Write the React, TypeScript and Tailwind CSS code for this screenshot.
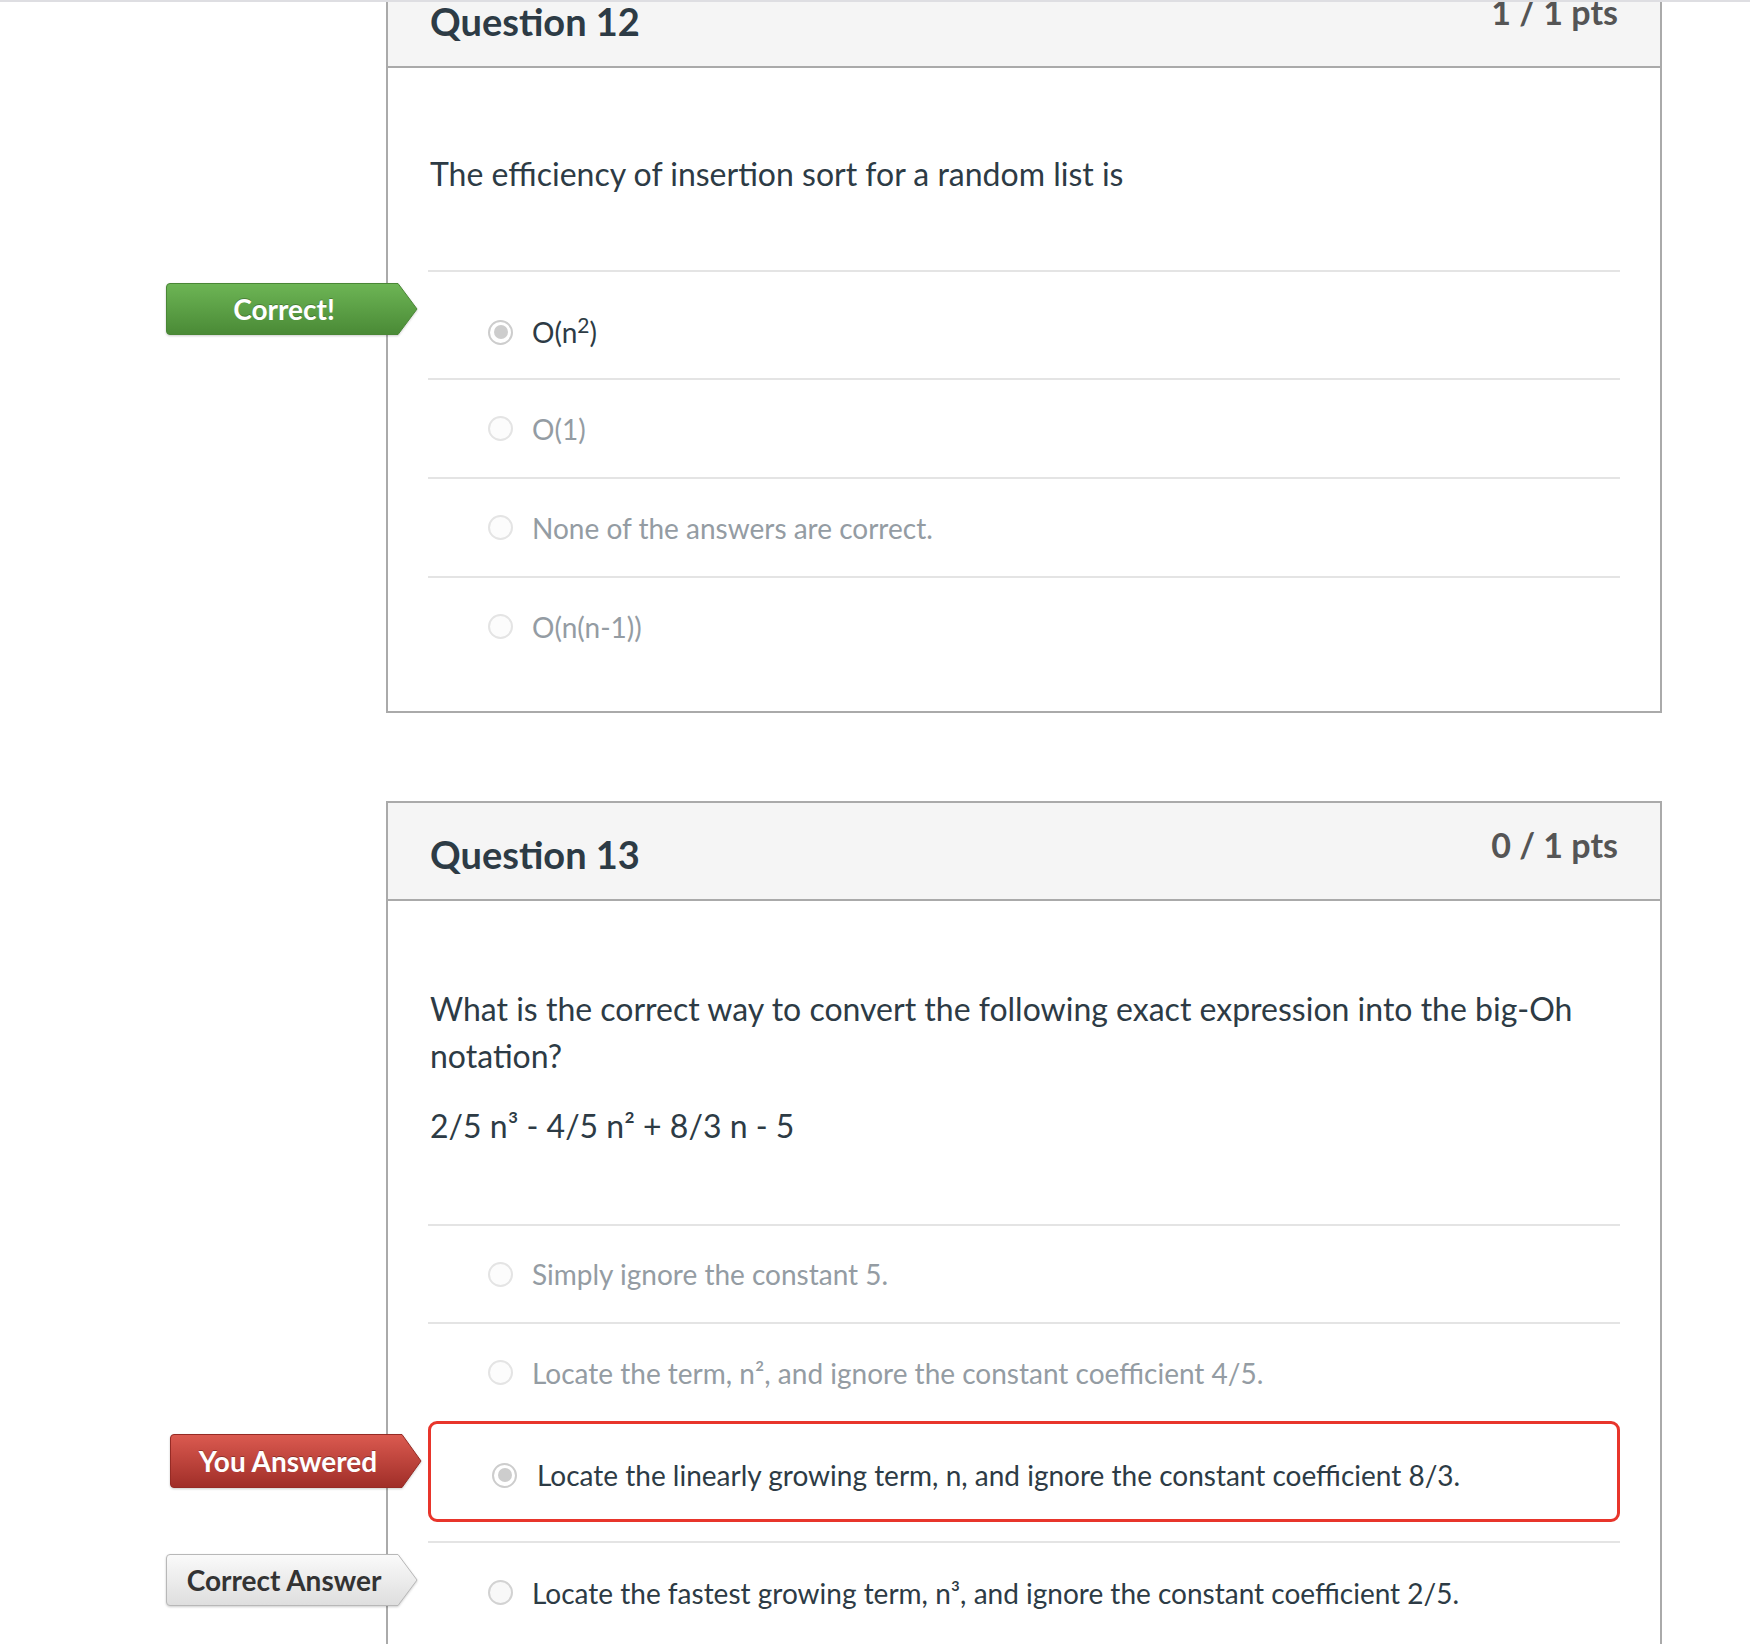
import React from "react";

type RadioKind = "checked" | "faint" | "plain";
type Tone = "green" | "red" | "gray";

function Radio({ kind }: { kind: RadioKind }) {
  if (kind === "checked") {
    return (
      <span className="flex h-[25px] w-[25px] shrink-0 items-center justify-center rounded-full border-2 border-[#cdcdcd] bg-white">
        <span className="h-[14px] w-[14px] rounded-full bg-[#cdcdcd]" />
      </span>
    );
  }
  return (
    <span
      className={
        kind === "faint"
          ? "h-[25px] w-[25px] shrink-0 rounded-full border-2 border-[#e4e4e4] bg-[#fcfcfc]"
          : "h-[25px] w-[25px] shrink-0 rounded-full border-2 border-[#d2d2d2] bg-[#f8f8f8]"
      }
    />
  );
}

const tones: Record<Tone, { top: string; bottom: string; stroke: string; text: string }> = {
  green: { top: "#6db555", bottom: "#4a8a36", stroke: "#4a8736", text: "text-white [text-shadow:0_-1px_0_rgba(0,0,0,0.25)]" },
  red: { top: "#db5a50", bottom: "#a02e28", stroke: "#962b25", text: "text-white [text-shadow:0_-1px_0_rgba(0,0,0,0.3)]" },
  gray: { top: "#fafafa", bottom: "#dedede", stroke: "#b8b8b8", text: "text-[#333333]" },
};

function Badge({ tone, label, h }: { tone: Tone; label: string; h: number }) {
  const t = tones[tone];
  const id = `grad-${tone}`;
  return (
    <div className="relative w-[252px]" style={{ height: h }}>
      <svg className="absolute inset-0 drop-shadow-[0_1px_1px_rgba(0,0,0,0.2)]" width="252" height={h} viewBox={`0 0 252 ${h}`}>
        <defs>
          <linearGradient id={id} x1="0" y1="0" x2="0" y2="1">
            <stop offset="0" stopColor={t.top} />
            <stop offset="1" stopColor={t.bottom} />
          </linearGradient>
        </defs>
        <path
          d={`M4 0.5 H232 L251 ${h / 2} L232 ${h - 0.5} H4 Q0.5 ${h - 0.5} 0.5 ${h - 4} V4 Q0.5 0.5 4 0.5 Z`}
          fill={`url(#${id})`}
          stroke={t.stroke}
          strokeWidth="1"
        />
      </svg>
      <div className={`relative flex h-full w-[236px] items-center justify-center text-[28px] font-bold ${t.text}`}>
        {label}
      </div>
    </div>
  );
}

function Header({ title, pts }: { title: string; pts: string }) {
  return (
    <div className="flex h-[98px] items-start justify-between border-b-2 border-[#aaaaaa] bg-[#f5f5f5] px-[42px]">
      <div className="mt-[29px] text-[38px] font-bold leading-[1.2] text-[#2d3b45]">{title}</div>
      <div className="mt-[22px] text-[34px] font-bold leading-[1.2] text-[#555555]">{pts}</div>
    </div>
  );
}

function Row({ children, kind, faded, h = 97 }: { children: React.ReactNode; kind: RadioKind; faded?: boolean; h?: number }) {
  return (
    <div className="flex items-center border-t-2 border-[#e4e4e4] pl-[60px]" style={{ height: h + 2 }}>
      <Radio kind={kind} />
      <span className={`ml-[19px] text-[28px] ${faded ? "text-[#949ca3]" : "text-[#2d3b45]"}`}>{children}</span>
    </div>
  );
}

export default function App() {
  return (
    <div className="min-h-screen overflow-hidden bg-white font-['Lato','Open_Sans',sans-serif]">
      <div className="relative z-10 h-[2px] bg-[#dedee2]" />

      <div className="ml-[386px] w-[1276px]">
        {/* Question 12 */}
        <div className="-mt-[34px] border-2 border-[#aaaaaa] bg-white">
          <Header title="Question 12" pts="1 / 1 pts" />
          <div className="px-[40px]">
            <p className="px-[2px] pb-[73px] pt-[82px] text-[32px] leading-[47px] text-[#2d3b45]">
              The efficiency of insertion sort for a random list is
            </p>

            <div className="relative flex h-[108px] items-center border-t-2 border-[#e4e4e4] pl-[60px] pt-[14px]">
              <div className="absolute -left-[262px] top-[11px]">
                <Badge tone="green" label="Correct!" h={52} />
              </div>
              <Radio kind="checked" />
              <span className="ml-[19px] text-[28px] text-[#2d3b45]">
                O(n<sup>2</sup>)
              </span>
            </div>
            <Row kind="faint" faded>O(1)</Row>
            <Row kind="faint" faded>None of the answers are correct.</Row>
            <Row kind="faint" faded>O(n(n-1))</Row>
            <div className="h-[36px]" />
          </div>
        </div>

        {/* Question 13 */}
        <div className="mt-[88px] border-2 border-[#aaaaaa] bg-white">
          <Header title="Question 13" pts="0 / 1 pts" />
          <div className="px-[40px]">
            <div className="px-[2px] pb-[75px] pt-[84px] text-[32px] leading-[47px] text-[#2d3b45]">
              <p>What is the correct way to convert the following exact expression into the big-Oh notation?</p>
              <p className="mt-[23px]">2/5 n³ - 4/5 n² + 8/3 n - 5</p>
            </div>

            <Row kind="faint" faded h={96}>Simply ignore the constant 5.</Row>
            <Row kind="faint" faded>Locate the term, n², and ignore the constant coefficient 4/5.</Row>

            <div className="relative mb-[19px] flex h-[101px] items-center rounded-[9px] border-[3px] border-[#e8352b] pl-[61px] pt-[7px]">
              <div className="absolute -left-[261px] top-[10px]">
                <Badge tone="red" label="You Answered" h={54} />
              </div>
              <Radio kind="checked" />
              <span className="ml-[20px] text-[28px] text-[#2d3b45]">
                Locate the linearly growing term, n, and ignore the constant coefficient 8/3.
              </span>
            </div>

            <div className="relative flex h-[99px] items-center border-t-2 border-[#e4e4e4] pl-[60px] pt-[2px]">
              <div className="absolute -left-[262px] top-[11px]">
                <Badge tone="gray" label="Correct Answer" h={52} />
              </div>
              <Radio kind="plain" />
              <span className="ml-[19px] text-[28px] text-[#2d3b45]">
                Locate the fastest growing term, n³, and ignore the constant coefficient 2/5.
              </span>
            </div>
            <div className="h-[60px]" />
          </div>
        </div>
      </div>
    </div>
  );
}
